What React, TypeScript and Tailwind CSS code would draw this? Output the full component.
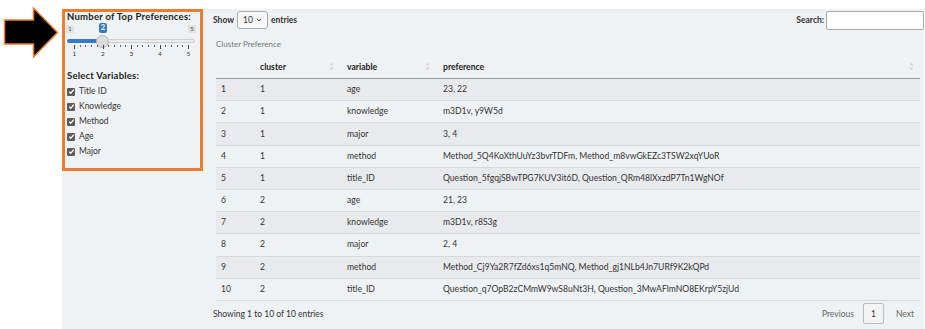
import React from 'react';

const rows = [
  ['1', '1', 'age', '23, 22'],
  ['2', '1', 'knowledge', 'm3D1v, y9W5d'],
  ['3', '1', 'major', '3, 4'],
  ['4', '1', 'method', 'Method_5Q4KoXthUuYz3bvrTDFm, Method_m8vwGkEZc3TSW2xqYUoR'],
  ['5', '1', 'title_ID', 'Question_5fgqjSBwTPG7KUV3it6D, Question_QRm48lXxzdP7Tn1WgNOf'],
  ['6', '2', 'age', '21, 23'],
  ['7', '2', 'knowledge', 'm3D1v, r8S3g'],
  ['8', '2', 'major', '2, 4'],
  ['9', '2', 'method', 'Method_Cj9Ya2R7fZd6xs1q5mNQ, Method_gj1NLb4Jn7URf9K2kQPd'],
  ['10', '2', 'title_ID', 'Question_q7OpB2zCMmW9wS8uNt3H, Question_3MwAFlmNO8EKrpY5zjUd'],
];

const variables = ['Title ID', 'Knowledge', 'Method', 'Age', 'Major'];

const SortIcon = () => (
  <svg width="5" height="9" viewBox="0 0 5 9" className="shrink-0">
    <path d="M2.5 0.5 L4.5 3.5 L0.5 3.5 Z" fill="#d4d4d8" />
    <path d="M2.5 8.5 L4.5 5.5 L0.5 5.5 Z" fill="#d4d4d8" />
  </svg>
);

const Slider = () => {
  const majors = [7, 35.5, 64, 92.5, 121];
  const minors: number[] = [];
  for (let i = 0; i < 4; i++) {
    for (let j = 1; j < 5; j++) minors.push(majors[i] + ((majors[i + 1] - majors[i]) * j) / 5);
  }
  return (
    <div className="relative h-[42px] w-full">
      <div className="absolute left-[-1px] top-[4px] h-[8px] w-[8px] rounded-[1px] bg-[#e1e1e1] text-[6.5px] leading-[8px] text-center text-[#555]">1</div>
      <div className="absolute left-[32px] top-[2px] h-[10px] w-[8px] rounded-[2px] bg-[#3a78c4] text-[7.5px] font-bold leading-[10px] text-center text-white">2</div>
      <div className="absolute left-[121px] top-[4px] h-[8px] w-[8px] rounded-[1px] bg-[#e1e1e1] text-[6.5px] leading-[8px] text-center text-[#555]">5</div>
      <div className="absolute left-0 top-[18px] h-[4px] w-[128px] rounded-full border border-[#cfcfcf] bg-[#ececec]" />
      <div className="absolute left-0 top-[18px] h-[4px] w-[36px] rounded-l-full bg-[#3a78c4]" />
      <div className="absolute left-[29px] top-[13.5px] h-[13px] w-[13px] rounded-full border border-[#b5b5b5] bg-[#dcdcdc]" />
      {majors.map((x, i) => (
        <React.Fragment key={i}>
          <div className="absolute top-[24px] h-[4px] w-px bg-[#444]" style={{ left: x }} />
          <div className="absolute top-[29px] w-[10px] -ml-[5px] text-center text-[6.5px] leading-[8px] text-[#333]" style={{ left: x + 0.5 }}>
            {i + 1}
          </div>
        </React.Fragment>
      ))}
      {minors.map((x, i) => (
        <div key={'m' + i} className="absolute top-[24px] h-[2px] w-px bg-[#666]" style={{ left: x }} />
      ))}
    </div>
  );
};

const Checkbox = () => (
  <div className="flex h-[8px] w-[8px] shrink-0 items-center justify-center rounded-[1px] bg-[#5b5b5b]">
    <svg width="7" height="7" viewBox="0 0 8 8">
      <path d="M1.5 4.2 L3.2 6 L6.6 1.8" stroke="white" strokeWidth="1.5" fill="none" />
    </svg>
  </div>
);

export default function App() {
  return (
    <div className="flex h-[329px] w-[925px] overflow-hidden bg-white text-[#333]" style={{ fontFamily: 'Lato, "Open Sans", sans-serif' }}>
      <div className="w-[62px] shrink-0 pl-[3px] pt-[6px]">
        <svg width="56" height="53" viewBox="0 0 56 53">
          <polygon points="1.5,14 30.5,14 30.5,2 54.5,26.5 30.5,51 30.5,38 1.5,38" fill="#000" stroke="#ed7d31" strokeWidth="1.5" />
        </svg>
      </div>

      <div className="mr-[1px] mt-[9px] flex flex-1 bg-[#eff2f5]">
        <div className="h-[162px] w-[141px] shrink-0 border-[3px] border-[#ed7d31] pl-[2px] pr-[3px]">
          <div className="whitespace-nowrap text-[9.5px] font-bold leading-[9px] tracking-[0.25px] text-[#222]">Number of Top Preferences:</div>
          <Slider />
          <div className="mt-[8px] text-[9.5px] font-bold leading-[10px] tracking-[0.2px] text-[#222]">Select Variables:</div>
          <div className="mt-[3px] flex flex-col">
            {variables.map((v) => (
              <div key={v} className="flex h-[15px] items-center gap-[4px] text-[8.5px] text-[#333]">
                <Checkbox />
                <span>{v}</span>
              </div>
            ))}
          </div>
        </div>

        <div className="flex flex-1 flex-col pl-[10px] pt-[1px]">
          <div className="flex h-[20px] items-center justify-between text-[8.5px] font-bold">
            <div className="flex items-center gap-[3px]">
              <span>Show</span>
              <div className="flex h-[18px] w-[31px] items-center justify-between rounded-[3px] border border-[#aaa] bg-[#f8f8f8] px-[5px] font-normal">
                <span>10</span>
                <svg width="6" height="4" viewBox="0 0 6 4">
                  <path d="M0.8 0.8 L3 3 L5.2 0.8" stroke="#444" strokeWidth="1" fill="none" />
                </svg>
              </div>
              <span>entries</span>
            </div>
            <div className="flex items-center gap-[2px]">
              <span>Search:</span>
              <div className="h-[19px] w-[98px] rounded-[2px] border border-[#aaa] bg-white" />
            </div>
          </div>

          <div className="ml-[3px] mt-[8px] text-[8px] leading-[12px] text-[#777]">Cluster Preference</div>

          <div className="ml-[3px] mr-[4px] mt-[6px] text-[8.6px]">
            <div className="flex h-[23px] items-center border-b-[1.5px] border-[#999] font-bold text-[#222]">
              <div className="w-[39px]" />
              <div className="flex w-[87px] items-center justify-between pl-[5px] pr-[8px]">
                <span>cluster</span>
                <SortIcon />
              </div>
              <div className="flex w-[96px] items-center justify-between pl-[5px] pr-[8px]">
                <span>variable</span>
                <SortIcon />
              </div>
              <div className="flex flex-1 items-center justify-between pl-[5px] pr-[6px]">
                <span>preference</span>
                <SortIcon />
              </div>
            </div>
            {rows.map((r, i) => (
              <div
                key={r[0]}
                className={`flex h-[22.2px] items-center border-b border-[#d9d9d9] ${i % 2 === 0 ? 'bg-[#e9eaed]' : ''}`}
              >
                <div className="w-[39px] pl-[5px]">{r[0]}</div>
                <div className="w-[87px] pl-[5px]">{r[1]}</div>
                <div className="w-[96px] pl-[5px]">{r[2]}</div>
                <div className="flex-1 pl-[5px]">{r[3]}</div>
              </div>
            ))}
          </div>

          <div className="mr-[10px] mt-[2px] flex h-[22px] items-center justify-between text-[8.5px]">
            <span>Showing 1 to 10 of 10 entries</span>
            <div className="flex items-center">
              <span className="mr-[9px] text-[#666]">Previous</span>
              <div className="flex h-[21px] w-[21px] items-center justify-center rounded-[2px] border border-[#bbb] bg-[#f4f4f4]">1</div>
              <span className="ml-[12px] text-[#666]">Next</span>
            </div>
          </div>
        </div>
      </div>
    </div>
  );
}
